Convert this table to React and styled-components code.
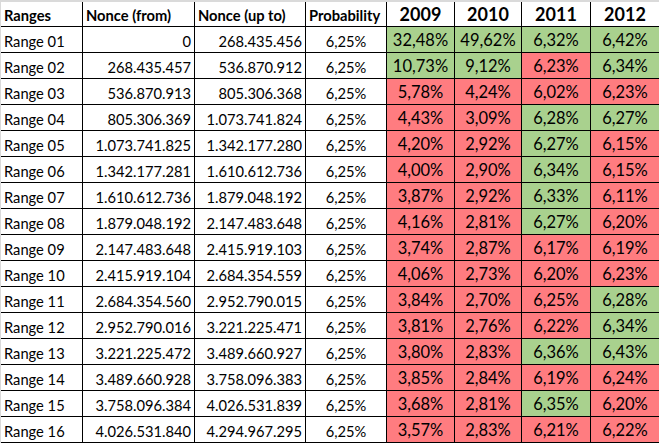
import styled, { createGlobalStyle } from "styled-components";

const GlobalStyle = createGlobalStyle`
  html, body {
    margin: 0;
    padding: 0;
    background: #ffffff;
  }
  body {
    font-family: Lato, "Open Sans", sans-serif;
    color: #000;
  }
`;

const rows = [
  ["Range 01", "0", "268.435.456", ["32,48%", "49,62%", "6,32%", "6,42%"]],
  ["Range 02", "268.435.457", "536.870.912", ["10,73%", "9,12%", "6,23%", "6,34%"]],
  ["Range 03", "536.870.913", "805.306.368", ["5,78%", "4,24%", "6,02%", "6,23%"]],
  ["Range 04", "805.306.369", "1.073.741.824", ["4,43%", "3,09%", "6,28%", "6,27%"]],
  ["Range 05", "1.073.741.825", "1.342.177.280", ["4,20%", "2,92%", "6,27%", "6,15%"]],
  ["Range 06", "1.342.177.281", "1.610.612.736", ["4,00%", "2,90%", "6,34%", "6,15%"]],
  ["Range 07", "1.610.612.736", "1.879.048.192", ["3,87%", "2,92%", "6,33%", "6,11%"]],
  ["Range 08", "1.879.048.192", "2.147.483.648", ["4,16%", "2,81%", "6,27%", "6,20%"]],
  ["Range 09", "2.147.483.648", "2.415.919.103", ["3,74%", "2,87%", "6,17%", "6,19%"]],
  ["Range 10", "2.415.919.104", "2.684.354.559", ["4,06%", "2,73%", "6,20%", "6,23%"]],
  ["Range 11", "2.684.354.560", "2.952.790.015", ["3,84%", "2,70%", "6,25%", "6,28%"]],
  ["Range 12", "2.952.790.016", "3.221.225.471", ["3,81%", "2,76%", "6,22%", "6,34%"]],
  ["Range 13", "3.221.225.472", "3.489.660.927", ["3,80%", "2,83%", "6,36%", "6,43%"]],
  ["Range 14", "3.489.660.928", "3.758.096.383", ["3,85%", "2,84%", "6,19%", "6,24%"]],
  ["Range 15", "3.758.096.384", "4.026.531.839", ["3,68%", "2,81%", "6,35%", "6,20%"]],
  ["Range 16", "4.026.531.840", "4.294.967.295", ["3,57%", "2,83%", "6,21%", "6,22%"]],
];

const years = ["2009", "2010", "2011", "2012"];

// above the 6,25% expected share -> green
const isHigh = (v) => parseFloat(v.replace("%", "").replace(",", ".")) > 6.25;

const Sheet = styled.div`
  border-top: 2px solid #dadada;
  border-left: 1px solid #dadada;
  width: 659px;
  box-sizing: border-box;
`;

const Grid = styled.div`
  display: grid;
  grid-template-columns: 81px 111px 110px 80px 67px 66px 68px 68px;
  grid-template-rows: 24px repeat(16, 25px);
  gap: 1px;
  background: #000;
  padding: 0 1px 1px 0;
  width: max-content;
`;

const Cell = styled.div`
  display: flex;
  align-items: flex-end;
  justify-content: ${(p) => p.$align || "flex-start"};
  padding: 0 3px 2px 3px;
  background: ${(p) => p.$bg || "#fff"};
  font-size: 14.7px;
  line-height: 18px;
  white-space: nowrap;
  overflow: hidden;
`;

const HeadCell = styled(Cell)`
  font-weight: 700;
  padding-bottom: 2px;
`;

const YearHead = styled(HeadCell)`
  justify-content: center;
  font-size: 18px;
  line-height: 22px;
  padding-bottom: 1px;
`;

const Pct = styled(Cell)`
  justify-content: center;
  font-size: 16.5px;
  line-height: 21px;
  padding-bottom: 1px;
  background: ${(p) => (p.$high ? "#a9d18e" : "#ff7c80")};
`;

export default function App() {
  return (
    <>
      <GlobalStyle />
      <Sheet>
        <Grid>
          <HeadCell>Ranges</HeadCell>
          <HeadCell>Nonce (from)</HeadCell>
          <HeadCell>Nonce (up to)</HeadCell>
          <HeadCell>Probability</HeadCell>
          {years.map((y) => (
            <YearHead key={y}>{y}</YearHead>
          ))}
          {rows.map(([name, from, to, vals]) => [
            <Cell key={name}>{name}</Cell>,
            <Cell key={name + "f"} $align="flex-end">{from}</Cell>,
            <Cell key={name + "t"} $align="flex-end">{to}</Cell>,
            <Cell key={name + "p"} $align="center">6,25%</Cell>,
            ...vals.map((v, i) => (
              <Pct key={name + i} $high={isHigh(v)}>{v}</Pct>
            )),
          ])}
        </Grid>
      </Sheet>
    </>
  );
}
